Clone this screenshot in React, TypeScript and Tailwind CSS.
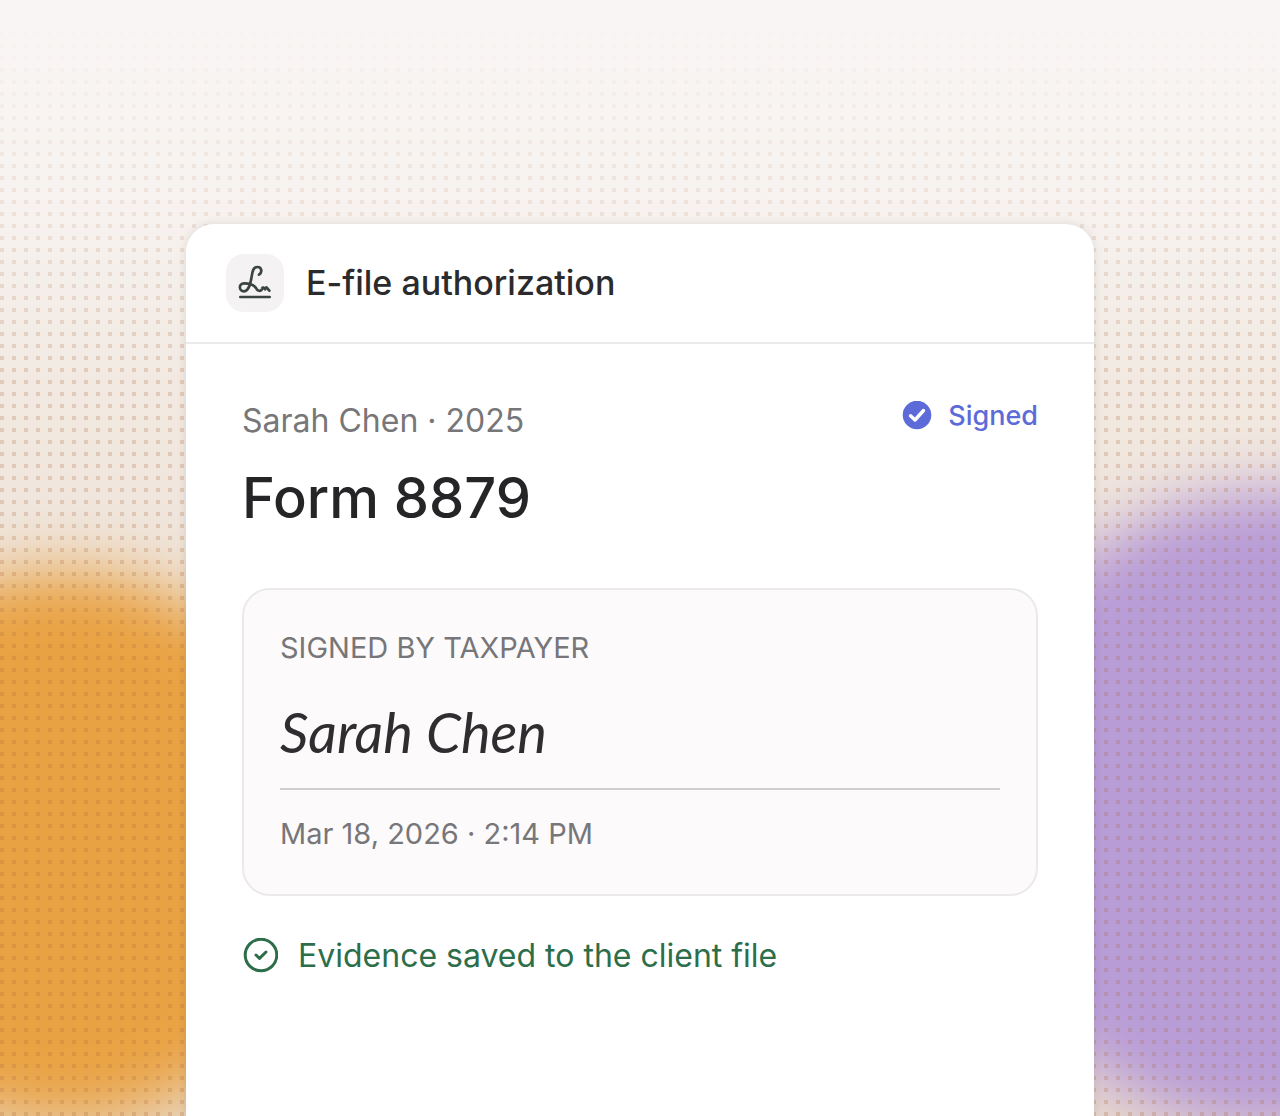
import type { ReactNode } from "react";

const SignatureIcon = () => (
  <svg
    viewBox="0 0 174 174"
    className="size-full"
    fill="none"
    stroke="#3a4441"
    strokeWidth="8"
    strokeLinecap="round"
    strokeLinejoin="round"
    aria-hidden="true"
  >
    <path d="M99 62C110 55 107 39 95 39C84 39 81 47 79 56C75 78 72 112 54 112C38 112 37 88 54 88C74 88 84 92 90 102C95 113 106 113 109 103C110 99 113 100 117 106C118 100 121 99 123 102L130 110" />
    <path d="M43 129H131" />
  </svg>
);

const SignedIcon = () => (
  <svg viewBox="0 0 30 30" className="size-[30px]" fill="none" aria-hidden="true">
    <circle cx="15" cy="14" r="14.3" fill="#5d6bd8" />
    <path
      d="M8.5 14.8L13 19L21.5 9.5"
      stroke="#fff"
      strokeWidth="3.4"
      strokeLinecap="round"
      strokeLinejoin="round"
    />
  </svg>
);

const SavedIcon = () => (
  <svg
    viewBox="0 0 36 36"
    className="size-9"
    fill="none"
    stroke="#2d6e4a"
    strokeLinecap="round"
    strokeLinejoin="round"
    aria-hidden="true"
  >
    <circle cx="19" cy="17" r="15.8" strokeWidth="3" />
    <path d="M14 17L17.5 20.3L24 14" strokeWidth="3" />
  </svg>
);

const Backdrop = () => (
  <div className="absolute inset-0 -z-10 overflow-hidden bg-linear-to-b from-[#f8f5f3] via-[#efe4da] to-[#eadbcd]">
    <div className="absolute -left-[215px] top-[572px] size-[550px] rounded-full bg-[#e9a243] blur-[30px]" />
    <div className="absolute -right-[320px] top-[490px] size-[640px] rounded-full bg-[#b89cd6] blur-[30px]" />
    <div className="absolute inset-0 bg-[linear-gradient(90deg,#ac6a3c3d_4px,transparent_4px)] bg-size-[12px_12px] mask-[linear-gradient(transparent_8px,#000_8px)] mask-size-[12px_12px]" />
    <div className="absolute inset-x-0 top-0 h-[380px] bg-linear-to-b from-[#f8f5f4] from-5% to-[#f4ece4]/0" />
  </div>
);

const CardHeader = ({ title, icon }: { title: string; icon: ReactNode }) => (
  <header className="flex items-center gap-[22px] border-b-2 border-[#ebe9ea] px-10 py-[30px]">
    <div className="size-[58px] shrink-0 rounded-[18px] bg-[#f4f2f3]">{icon}</div>
    <h1 className="text-[34px] font-medium leading-10 text-[#2b2a2c]">{title}</h1>
  </header>
);

const App = () => {
  return (
    <main className="relative isolate flex min-h-screen flex-col pt-56 font-['Inter','Liberation_Sans',sans-serif]">
      <Backdrop />
      <section className="mx-auto w-full max-w-[908px] flex-1 rounded-t-[28px] bg-white shadow-[0_0_10px_#0000001a]">
        <CardHeader title="E-file authorization" icon={<SignatureIcon />} />

        <div className="px-14 pt-14">
          <div className="flex items-start justify-between">
            <div>
              <p className="text-[32px] leading-[42px] text-[#777678]">Sarah Chen · 2025</p>
              <h2 className="mt-[22px] text-[56px] font-medium leading-[68px] text-[#252426]">
                Form 8879
              </h2>
            </div>
            <div className="flex items-center gap-4 text-[27px] font-medium leading-8 text-[#5d6bd8]">
              <SignedIcon />
              Signed
            </div>
          </div>

          <div className="mt-14 rounded-[28px] border-2 border-[#ebe9eb] bg-[#fcfafb] px-9 pt-10 pb-[42px]">
            <p className="text-[29px] leading-9 uppercase text-[#777678]">Signed by taxpayer</p>
            <p className="mt-7 border-b-2 border-[#cfcdcf] pb-[18px] font-['Lato','Open_Sans',sans-serif] text-[56px] italic leading-[76px] text-[#2f2d2f]">
              Sarah Chen
            </p>
            <p className="mt-[26px] text-[29px] leading-9 text-[#777678]">Mar 18, 2026 · 2:14 PM</p>
          </div>

          <div className="mt-10 flex items-center gap-5 text-[32px] leading-10 text-[#2d6e4a]">
            <SavedIcon />
            Evidence saved to the client file
          </div>
        </div>
      </section>
    </main>
  );
};

export default App;
